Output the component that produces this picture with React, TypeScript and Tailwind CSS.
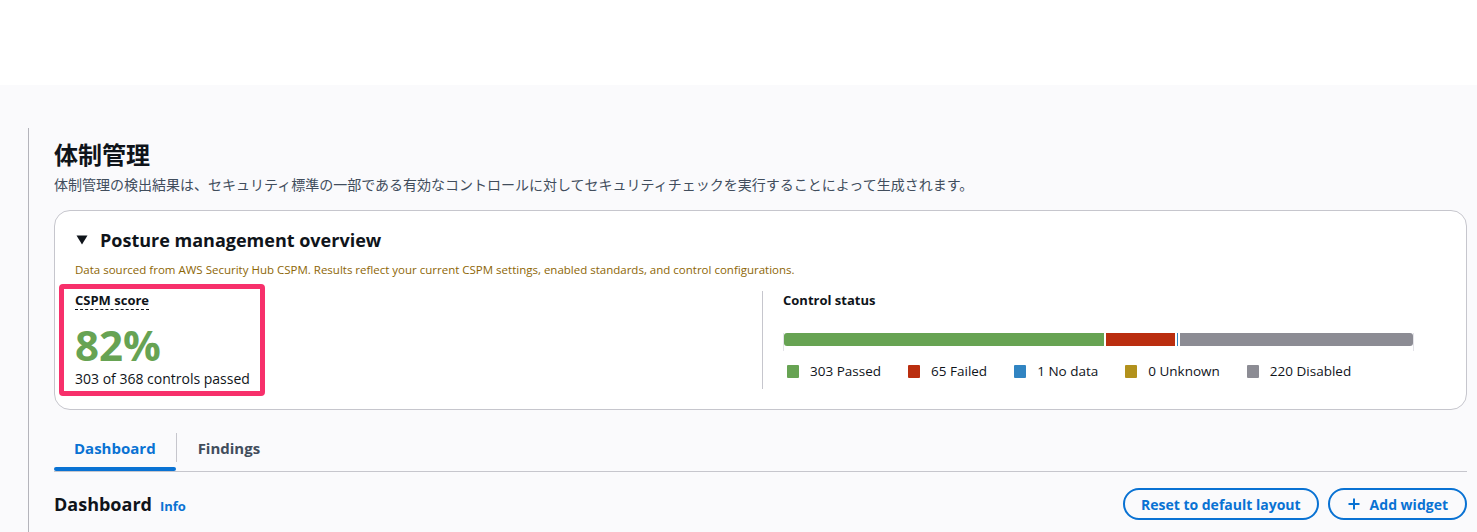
import React from "react";

const font = { fontFamily: "'Open Sans', 'Noto Sans CJK JP', sans-serif" };

type Status = { label: string; count: number; color: string };

const statuses: Status[] = [
  { label: "Passed", count: 303, color: "bg-[#67a353]" },
  { label: "Failed", count: 65, color: "bg-[#ba2e0f]" },
  { label: "No data", count: 1, color: "bg-[#3184c2]" },
  { label: "Unknown", count: 0, color: "bg-[#b2911c]" },
  { label: "Disabled", count: 220, color: "bg-[#8c8c94]" },
];

function StatusBar() {
  return (
    <div className="mt-[24px] border-x border-[#e3e3e8] pb-[5px] mr-[32px]">
      <div className="flex h-[13px] gap-[2px] overflow-hidden rounded-[3px]">
        {statuses
          .filter((s) => s.count > 0)
          .map((s) => (
            <div
              key={s.label}
              className={`${s.color} h-full`}
              style={{ flexGrow: s.count, flexBasis: 0 }}
            />
          ))}
      </div>
    </div>
  );
}

function Legend() {
  return (
    <div className="mt-[10px] flex items-center gap-[27px] pl-[4px]">
      {statuses.map((s) => (
        <div key={s.label} className="flex items-center gap-[11px]">
          <span className={`${s.color} inline-block h-[13px] w-[12px] rounded-[1px]`} />
          <span className="text-[13.5px] leading-[20px] text-[#0f141a]">
            {s.count} {s.label}
          </span>
        </div>
      ))}
    </div>
  );
}

export default function App() {
  return (
    <div className="min-h-screen bg-white" style={font}>
      <div className="h-[85px] bg-white" />

      <div className="bg-[#fafafc] pt-[43px] pl-[28px] min-h-[447px]">
        <div className="border-l border-[#b4b4bb] pl-[25px] pr-[10px] pt-[12px] pb-[20px]">
          {/* Page header */}
          <h1 className="text-[24px] leading-[30px] font-bold text-[#0f141a]">体制管理</h1>
          <p className="mt-[5px] text-[14px] leading-[20px] text-[#414d5c]">
            体制管理の検出結果は、セキュリティ標準の一部である有効なコントロールに対してセキュリティチェックを実行することによって生成されます。
          </p>

          {/* Overview card */}
          <div className="mt-[15px] rounded-[16px] border border-[#c6c6cd] bg-white pl-[20px] pr-[20px] pt-[17px] pb-[20px]">
            <div className="flex items-center gap-[12px]">
              <svg width="12" height="10" viewBox="0 0 12 10" className="ml-[1px]">
                <path d="M0.5 0.5 H11.5 L6 9.5 Z" fill="#0f141a" />
              </svg>
              <h2 className="text-[18px] leading-[24px] font-bold text-[#0f141a]">
                Posture management overview
              </h2>
            </div>
            <p className="mt-[10px] text-[11.5px] leading-[16px] text-[#8d6605]">
              Data sourced from AWS Security Hub CSPM. Results reflect your current CSPM settings, enabled standards, and control configurations.
            </p>

            <div className="mt-[13px] grid grid-cols-[687px_1fr]">
              {/* Score */}
              <div className="relative leading-none">
                <div className="pointer-events-none absolute left-[-16px] top-[-7px] h-[112px] w-[206px] rounded-[4px] border-[5px] border-[#f7306b]" />
                <span className="block w-fit border-b border-dashed border-[#0f141a] text-[13px] leading-[18px] font-bold text-[#0f141a]">
                  CSPM score
                </span>
                <div className="mt-[13px] text-[42px] leading-[44px] font-bold text-[#67a353]">82%</div>
                <div className="mt-[2px] text-[14px] leading-[20px] text-[#0f141a]">303 of 368 controls passed</div>
              </div>

              {/* Control status */}
              <div className="border-l border-[#c6c6cd] pl-[20px]">
                <div className="text-[13px] leading-[18px] font-bold text-[#0f141a]">Control status</div>
                <StatusBar />
                <Legend />
              </div>
            </div>
          </div>

          {/* Tabs */}
          <div className="mt-[16px] flex border-b border-[#c6c6cd]">
            <div className="flex flex-col">
              <div className="px-[20px] pt-[11px] pb-[8px] text-[15px] leading-[22px] font-bold text-[#0972d3]">
                Dashboard
              </div>
              <div className="h-[4px] rounded-full bg-[#0972d3]" />
            </div>
            <div className="mt-[7px] h-[29px] w-px bg-[#c6c6cd]" />
            <div className="px-[21px] pt-[11px] pb-[12px] text-[15px] leading-[22px] font-bold text-[#414d5c]">
              Findings
            </div>
          </div>

          {/* Dashboard header */}
          <div className="mt-[16px] flex items-center justify-between">
            <div className="flex items-baseline gap-[8px]">
              <h2 className="text-[18px] leading-[24px] font-bold text-[#0f141a]">Dashboard</h2>
              <span className="text-[13px] font-bold text-[#0972d3]">Info</span>
            </div>
            <div className="flex items-center gap-[9px]">
              <button className="h-[32px] rounded-full border-2 border-[#0972d3] px-[16px] text-[14px] font-bold text-[#0972d3]">
                Reset to default layout
              </button>
              <button className="flex h-[32px] items-center gap-[10px] rounded-full border-2 border-[#0972d3] pl-[18px] pr-[17px] text-[14px] font-bold text-[#0972d3]">
                <svg width="12" height="12" viewBox="0 0 12 12">
                  <path d="M6 0.5 V11.5 M0.5 6 H11.5" stroke="#0972d3" strokeWidth="2" fill="none" />
                </svg>
                Add widget
              </button>
            </div>
          </div>
        </div>
      </div>
    </div>
  );
}
